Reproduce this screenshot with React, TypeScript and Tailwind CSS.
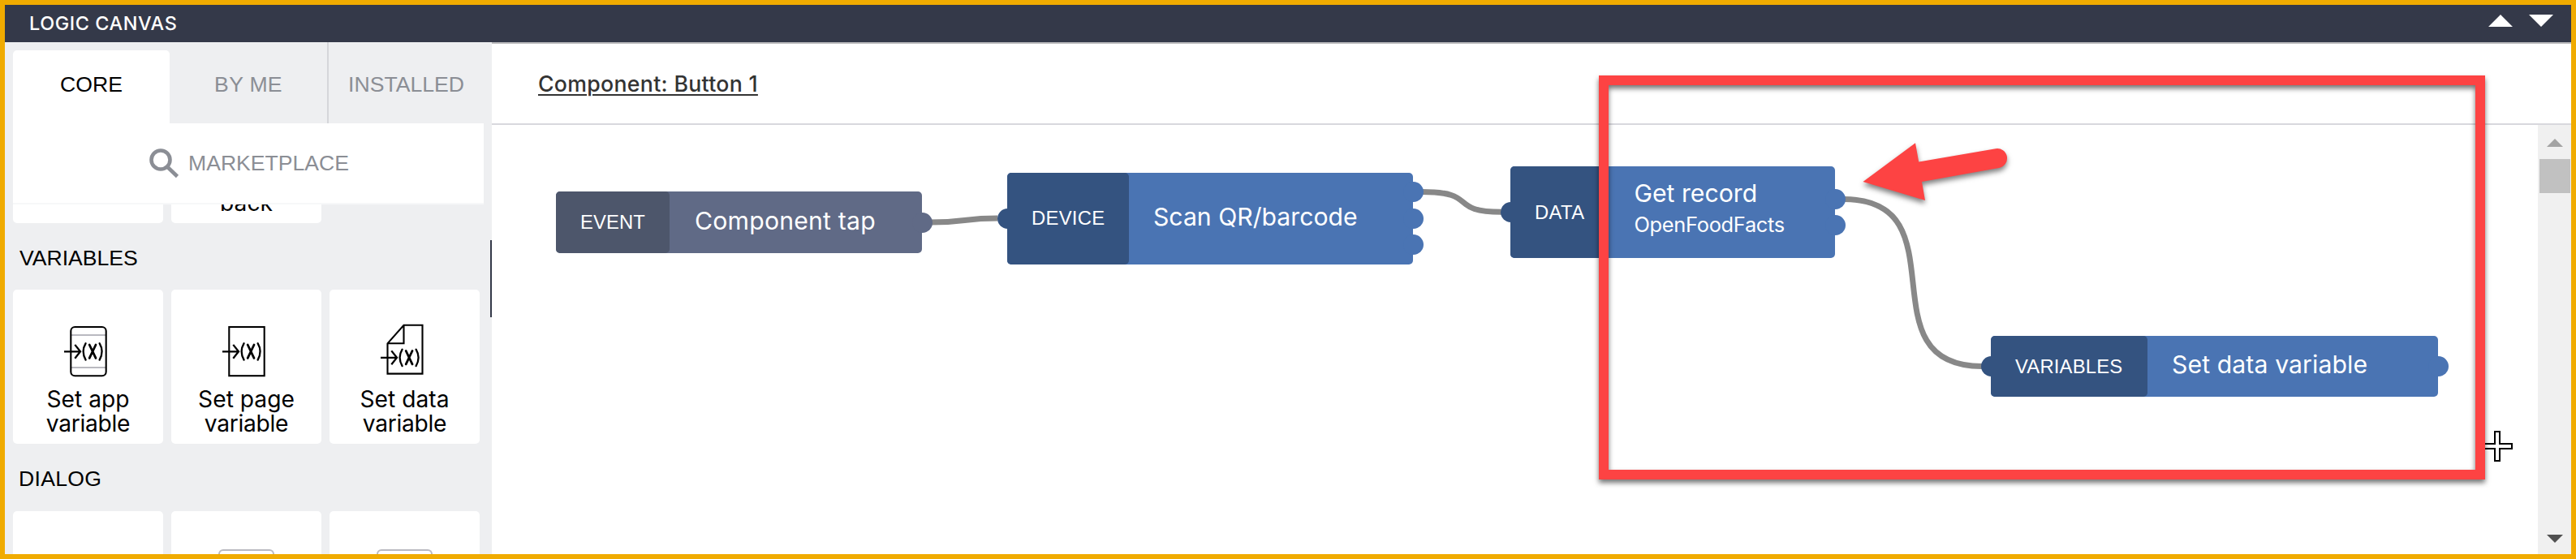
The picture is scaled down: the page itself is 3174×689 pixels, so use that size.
import React from "react";

type Port = { side: "in" | "out"; className: string };

function VariableMark() {
  return (
    <g strokeWidth="2.3">
      <path d="M4 35.3H24M17.3 26.9L24 35.3L17.3 43.7" />
      <path d="M30.6 25.2Q24.6 35.3 30.6 45.6M47.6 25.2Q53.6 35.3 47.6 45.6" strokeLinecap="round" />
      <path d="M35.2 27L43 43.4M43 27L35.2 43.4" strokeWidth="2.8" strokeLinecap="round" />
    </g>
  );
}

function CardIcon({ kind }: { kind: "app" | "page" | "data" }) {
  return (
    <svg viewBox="0 0 67 70" className="h-[70px] w-[67px] shrink-0" fill="none" stroke="#000" strokeWidth="2.1">
      {kind === "app" && (
        <>
          <path d="M12.5 15H55.5M12.5 55H55.5" stroke="#b9b9c0" />
          <rect x="12.3" y="5" width="43.4" height="60.2" rx="5" />
        </>
      )}
      {kind === "page" && <rect x="12.3" y="5" width="43.4" height="60.2" />}
      {kind === "data" && <path d="M32.5 2.8H55.5V62.6H12.5V25.3ZM32.5 2.8V25.3H12.5" />}
      {kind === "data" ? (
        <g transform="translate(0 7.5)">
          <VariableMark />
        </g>
      ) : (
        <VariableMark />
      )}
    </svg>
  );
}

function Card({ kind, first }: { kind: "app" | "page" | "data"; first: string }) {
  return (
    <div className="flex h-[190px] w-[185px] flex-col items-center rounded-[5px] bg-white pt-[41px] font-['Inter',sans-serif] text-[28.2px] leading-[30px]">
      <CardIcon kind={kind} />
      <div className="mt-[9px] text-center">
        {first}
        <br />
        <span className="tracking-[-0.3px]">variable</span>
      </div>
    </div>
  );
}

function DialogCard({ icon }: { icon?: boolean }) {
  return (
    <div className="flex h-[53px] w-[185px] justify-center rounded-t-[5px] bg-white pt-[47px]">
      {icon && <div className="h-[6px] w-[69px] rounded-t-[6px] border-2 border-b-0 border-[#b9b9c0]" />}
    </div>
  );
}

function Sidebar() {
  return (
    <aside className="relative flex w-[600px] shrink-0 flex-col bg-[#eeeff1] px-[10px] font-['Liberation_Sans',sans-serif] text-[26.6px] text-black">
      <div className="flex h-[100px] shrink-0">
        <div className="mt-[10px] flex w-[193px] items-center justify-center rounded-t-[5px] bg-white pb-[5px]">CORE</div>
        <div className="flex w-[196px] items-center justify-center border-r-2 border-[#d5d6da] pt-[5px] tracking-[0.3px] text-[#8b8e95]">BY ME</div>
        <div className="flex w-[191px] items-center justify-center pt-[5px] text-[#8b8e95]">INSTALLED</div>
      </div>
      <div className="flex h-[100px] shrink-0 items-center border-b-2 border-[#f7f8f9] bg-white pl-[167px] text-[#8b8e95]">
        <svg viewBox="0 0 38 38" className="h-[38px] w-[38px]" fill="none" stroke="#8b8e95" strokeWidth="4.6">
          <circle cx="15" cy="15" r="11.5" />
          <path d="M23 23.5L35.5 35.5" />
        </svg>
        <span className="ml-[11px] pt-[1px]">MARKETPLACE</span>
      </div>
      <div className="flex h-[23px] shrink-0 gap-[10px] overflow-hidden font-['Inter',sans-serif] text-[28.2px] leading-[29px]">
        <div className="w-[185px] rounded-b-[5px] bg-white" />
        <div className="flex w-[185px] items-end justify-center rounded-b-[5px] bg-white pb-[10px]">back</div>
      </div>
      <div className="flex h-[82px] shrink-0 items-center pt-[6px] pl-[8px]">VARIABLES</div>
      <div className="flex shrink-0 gap-[10px]">
        <Card kind="app" first="Set app" />
        <Card kind="page" first="Set page" />
        <Card kind="data" first="Set data" />
      </div>
      <div className="flex h-[83px] shrink-0 items-center pt-[5px] pl-[7px] tracking-[0.3px]">DIALOG</div>
      <div className="flex shrink-0 gap-[10px]">
        <DialogCard />
        <DialogCard icon />
        <DialogCard icon />
      </div>
      <div className="absolute top-[244px] right-0 h-[95px] w-[2px] bg-[#343949]" />
    </aside>
  );
}

function Node({
  className,
  labelClass,
  labelColor,
  bodyColor,
  label,
  ports,
  children,
}: {
  className: string;
  labelClass: string;
  labelColor: string;
  bodyColor: string;
  label: string;
  ports: Port[];
  children: React.ReactNode;
}) {
  return (
    <div className={`absolute flex rounded-[5px] text-white ${className} ${bodyColor}`}>
      {ports.map((p, i) => (
        <i
          key={i}
          className={`absolute h-[25px] w-[25px] rounded-full ${
            p.side === "in" ? `left-[-12.5px] ${labelColor}` : `right-[-12.5px] ${bodyColor}`
          } ${p.className}`}
        />
      ))}
      <div
        className={`relative flex shrink-0 items-center rounded-[5px] pl-[30px] font-['Liberation_Sans',sans-serif] text-[23.8px] ${labelColor} ${labelClass}`}
      >
        {label}
      </div>
      <div className="relative flex flex-col justify-center text-[30.2px] leading-[36px] whitespace-nowrap">{children}</div>
    </div>
  );
}

function Canvas() {
  return (
    <div className="relative flex-1">
      <svg viewBox="606 154 2521 529" className="absolute inset-0 h-[529px] w-[2521px]" fill="none" stroke="#888" strokeWidth="7">
        <path d="M1146 274C1190 274 1187 269 1229 269" />
        <path d="M1752 236.5C1823 236.5 1783 261.3 1850 261.3" />
        <path d="M2272 245.5C2420 245.5 2294 451.5 2442 451.5" />
      </svg>
      <Node
        className="top-[82px] left-[79px] h-[76px] w-[451px]"
        labelClass="w-[140px] tracking-[0.1px]"
        labelColor="bg-[#4d566b]"
        bodyColor="bg-[#606a86]"
        label="EVENT"
        ports={[{ side: "out", className: "top-[25.5px]" }]}
      >
        <span className="pb-[5px] pl-[31px] tracking-[0.2px]">Component tap</span>
      </Node>
      <Node
        className="top-[58.5px] left-[635px] h-[113px] w-[500px]"
        labelClass="w-[150px] tracking-[0.3px]"
        labelColor="bg-[#345380]"
        bodyColor="bg-[#4a74b3]"
        label="DEVICE"
        ports={[
          { side: "in", className: "top-[44px]" },
          { side: "out", className: "top-[11.5px]" },
          { side: "out", className: "top-[44px]" },
          { side: "out", className: "top-[76.5px]" },
        ]}
      >
        <span className="pb-[4px] pl-[30px]">Scan QR/barcode</span>
      </Node>
      <Node
        className="top-[51px] left-[1255px] h-[113px] w-[400px]"
        labelClass="w-[121px] tracking-[0.4px]"
        labelColor="bg-[#345380]"
        bodyColor="bg-[#4a74b3]"
        label="DATA"
        ports={[
          { side: "in", className: "top-[44px]" },
          { side: "out", className: "top-[28px]" },
          { side: "out", className: "top-[60px]" },
        ]}
      >
        <span className="pl-[31.5px]">Get record</span>
        <span className="pt-[3px] pb-[9px] pl-[31.5px] text-[25.4px] tracking-[-0.3px]">OpenFoodFacts</span>
      </Node>
      <Node
        className="top-[260px] left-[1847px] h-[75px] w-[551px]"
        labelClass="w-[193px] tracking-[0.2px]"
        labelColor="bg-[#345380]"
        bodyColor="bg-[#4a74b3]"
        label="VARIABLES"
        ports={[
          { side: "in", className: "top-[25px]" },
          { side: "out", className: "top-[25px]" },
        ]}
      >
        <span className="pb-[5px] pl-[30px] tracking-[0.1px]">Set data variable</span>
      </Node>

      <svg viewBox="0 0 38 38" className="absolute top-[377px] left-[2452px] h-[38px] w-[38px]" fill="#fff" stroke="#000" strokeWidth="2">
        <path d="M16 1H22V16H37V22H22V37H16V22H1V16H16Z" />
      </svg>
      <div className="absolute top-[-61px] left-[1364px] h-[498px] w-[1092px] border-[12px] border-[#fd4343] drop-shadow-[0_4px_3px_rgba(0,0,0,0.55)]" />
      <svg
        viewBox="2280 160 210 110"
        className="absolute top-[6px] left-[1674px] h-[110px] w-[210px] drop-shadow-[0_4px_3px_rgba(0,0,0,0.5)]"
        fill="#fd4343"
      >
        <path d="M2295.5 224L2360 176.3L2364.2 199.5L2459 183.2A12 12 0 0 1 2463 207L2368 224L2372 247Z" />
      </svg>
    </div>
  );
}

function Scrollbar() {
  return (
    <div className="flex w-[41px] shrink-0 flex-col items-center bg-[#f0f0f0]">
      <svg viewBox="0 0 20 10" className="mt-[17px] h-[10px] w-[20px]" fill="#a3a3a3">
        <path d="M0 10L10 0L20 10Z" />
      </svg>
      <div className="mt-[15px] h-[42px] w-[38px] bg-[#c1c1c1]" />
      <svg viewBox="0 0 20 10" className="mt-auto mb-[14px] h-[10px] w-[20px]" fill="#505050">
        <path d="M0 0L10 10L20 0Z" />
      </svg>
    </div>
  );
}

export default function App() {
  return (
    <div className="flex h-[689px] w-[3174px] flex-col overflow-hidden border-6 border-[#f0ab00] bg-white font-['Inter',sans-serif]">
      <header className="flex h-[46px] shrink-0 items-center bg-[#343949] pr-[22px] pl-[30px] text-white">
        <h1 className="text-[23.4px] font-medium tracking-[0.6px]">LOGIC CANVAS</h1>
        <svg viewBox="0 0 80 15" className="mb-[7px] ml-auto h-[15px] w-[80px]" fill="#fff">
          <path d="M0 15L15 0L30 15ZM50 0L65 15L80 0Z" />
        </svg>
      </header>
      <div className="flex min-h-0 flex-1">
        <Sidebar />
        <main className="flex min-w-0 flex-1 flex-col">
          <div className="flex h-[102px] shrink-0 items-center border-t-2 border-b-2 border-t-[#bbbbbd] border-b-[#d8d8dd] pl-[57px]">
            <a className="text-[26.7px] font-medium tracking-[0.3px] text-[#333] underline decoration-2 underline-offset-[3px]">Component: Button 1</a>
          </div>
          <div className="flex min-h-0 flex-1">
            <Canvas />
            <Scrollbar />
          </div>
        </main>
      </div>
    </div>
  );
}
